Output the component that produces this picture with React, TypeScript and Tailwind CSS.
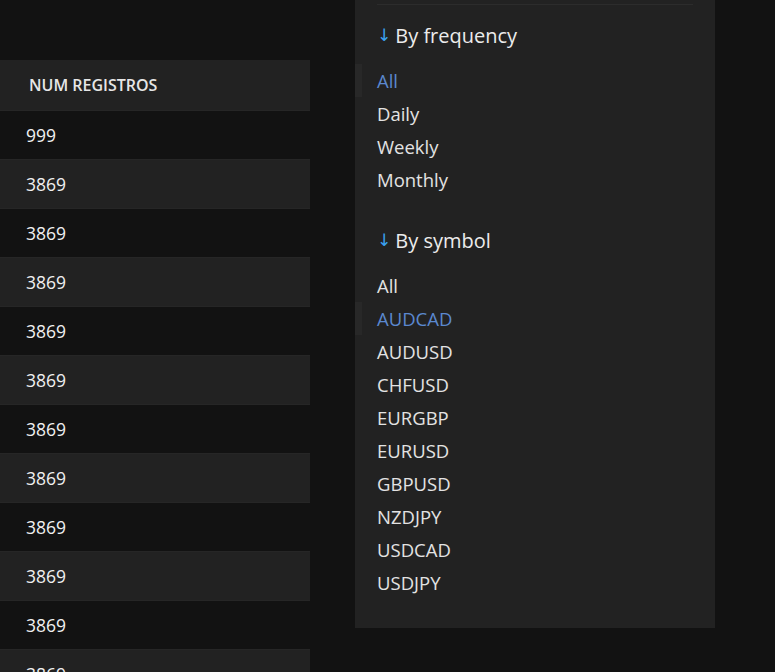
import React from "react";

const rows = ["999", ...Array(11).fill("3869")];

const frequencies = ["All", "Daily", "Weekly", "Monthly"];
const symbols = [
  "All",
  "AUDCAD",
  "AUDUSD",
  "CHFUSD",
  "EURGBP",
  "EURUSD",
  "GBPUSD",
  "NZDJPY",
  "USDCAD",
  "USDJPY",
];

const FilterItem = ({ label, active }: { label: string; active: boolean }) => (
  <div
    className={`flex h-[33px] items-center border-l-[7px] pl-[15px] text-[18.5px] ${
      active ? "border-[#282828] text-[#5b88cf]" : "border-transparent text-[#e3e3e3]"
    }`}
  >
    {label}
  </div>
);

const FilterTitle = ({ children }: { children: React.ReactNode }) => (
  <div className="flex h-6 items-center gap-[4px] px-[22px] text-[20px] text-[#ececec]">
    <span className="text-[17px] text-[#3aa3f2]" style={{ fontFamily: '"DejaVu Sans", sans-serif' }}>
      ↓
    </span>
    <span>{children}</span>
  </div>
);

export default function App() {
  return (
    <div
      className="flex h-[672px] w-[775px] overflow-hidden bg-[#121212]"
      style={{ fontFamily: '"Open Sans", "Noto Sans", sans-serif' }}
    >
      {/* table */}
      <div className="w-[310px] shrink-0 pt-[60px]">
        <div className="flex h-[50px] items-center bg-[#222222] pl-[29px] text-[16px] font-semibold text-[#e6e6e6]">
          NUM REGISTROS
        </div>
        {rows.map((v, i) => (
          <div
            key={i}
            className={`flex h-[49px] items-center border-t border-[#262626] pl-[26px] text-[17.5px] text-[#f0f0f0] ${
              i % 2 === 0 ? "bg-[#121212]" : "bg-[#222222]"
            }`}
          >
            {v}
          </div>
        ))}
      </div>

      {/* filters */}
      <div className="ml-[45px] h-[628px] w-[360px] shrink-0 bg-[#222222]">
        <div className="mx-[22px] h-[5px] border-b border-[#2c2c2c]" />
        <div className="pt-[19px]">
          <FilterTitle>By frequency</FilterTitle>
          <div className="mt-[16px]">
            {frequencies.map((f, i) => (
              <FilterItem key={f} label={f} active={i === 0} />
            ))}
          </div>
        </div>
        <div className="pt-[33px]">
          <FilterTitle>By symbol</FilterTitle>
          <div className="mt-[16px]">
            {symbols.map((s, i) => (
              <FilterItem key={s} label={s} active={i === 1} />
            ))}
          </div>
        </div>
      </div>
    </div>
  );
}
